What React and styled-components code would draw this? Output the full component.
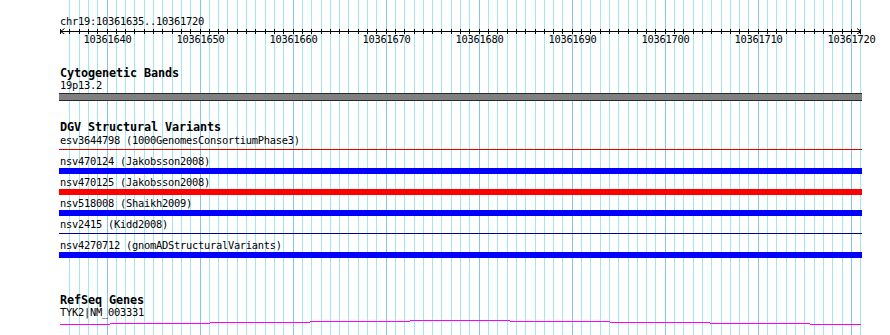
import React from "react";
import styled, { createGlobalStyle } from "styled-components";

const GlobalStyle = createGlobalStyle`
  html, body { margin: 0; padding: 0; background: #ffffff; }
  body { font-family: "DejaVu Sans Mono", "Liberation Mono", monospace; color: #000; }
`;

const START = 10361635;
const BASES = 86;
const PX = 9.304;
const ORIGIN = 1.5; // local x of the first base edge inside the track column
const COL_W = 803;

const gx = (k) => Math.floor(ORIGIN + k * PX);

const Page = styled.div`
  position: relative;
  width: 890px;
  height: 335px;
  overflow: hidden;
  background: #ffffff;
`;

const GridLayer = styled.svg`
  position: absolute;
  left: 59px;
  top: 0;
  z-index: 0;
`;

const Column = styled.div`
  position: relative;
  z-index: 1;
  margin-left: 59px;
  width: ${COL_W}px;
  display: flex;
  flex-direction: column;
`;

const RulerSection = styled.div`
  display: flex;
  flex-direction: column;
  padding-top: 16px;
`;

const Label = styled.div`
  font-family: "DejaVu Sans Mono", "Liberation Mono", monospace;
  font-size: 10.4px;
  letter-spacing: -0.26px;
  line-height: 11px;
  height: 11px;
  padding-left: 1px;
  white-space: nowrap;
  color: #000;
`;

const RulerSvg = styled.svg`
  display: block;
`;

const TickLabels = styled.div`
  position: relative;
  height: 11px;
`;

const TickLabel = styled.span`
  position: absolute;
  top: 0;
  transform: translateX(-50%);
  font-size: 10.4px;
  letter-spacing: -0.26px;
  line-height: 11px;
  white-space: nowrap;
`;

const Section = styled.section`
  display: flex;
  flex-direction: column;
  margin-top: ${(p) => p.$gap}px;
`;

const TrackTitle = styled.div`
  font-family: "DejaVu Sans Mono", "Liberation Mono", monospace;
  font-weight: bold;
  font-size: 11.8px;
  letter-spacing: -0.1px;
  line-height: 13px;
  height: 13px;
  padding-left: 1px;
  white-space: nowrap;
`;

const BandBar = styled.div`
  box-sizing: border-box;
  margin-top: 2px;
  height: 8px;
  background: #808080;
  border-top: 1px solid #2a2a2a;
  border-bottom: 1px solid #2a2a2a;
`;

const FeatureList = styled.div`
  display: flex;
  flex-direction: column;
  margin-top: 1px;
`;

const FeatureRow = styled.div`
  display: flex;
  flex-direction: column;
  height: 21px;
`;

const BarSlot = styled.div`
  box-sizing: border-box;
  margin-top: 1px;
  height: 6px;
  padding-top: ${(p) => (p.$thin ? 2 : 0)}px;
`;

const FeatureBar = styled.div`
  height: ${(p) => (p.$thin ? 1 : 6)}px;
  background: ${(p) => p.$color};
`;

const GeneSvg = styled.svg`
  display: block;
  margin-top: 1px;
`;

const variants = [
  { label: "esv3644798 (1000GenomesConsortiumPhase3)", thin: true, color: "#e00000" },
  { label: "nsv470124 (Jakobsson2008)", thin: false, color: "#0000ff" },
  { label: "nsv470125 (Jakobsson2008)", thin: false, color: "#ff0000" },
  { label: "nsv518008 (Shaikh2009)", thin: false, color: "#0000ff" },
  { label: "nsv2415 (Kidd2008)", thin: true, color: "#00009a" },
  { label: "nsv4270712 (gnomADStructuralVariants)", thin: false, color: "#0000ff" },
];

function Grid() {
  const lines = [];
  for (let k = 1; k <= BASES; k++) {
    const x = gx(k) + 0.5;
    const major = k % 10 === 5;
    lines.push(
      <line
        key={k}
        x1={x}
        x2={x}
        y1={0}
        y2={335}
        stroke={major ? "#84c4ee" : "#a4e6f0"}
        strokeWidth="1"
      />
    );
  }
  return (
    <GridLayer width={COL_W} height={335} shapeRendering="crispEdges">
      {lines}
    </GridLayer>
  );
}

function Ruler() {
  const ticks = [];
  for (let k = 0; k <= BASES; k++) {
    const x = (k === 0 ? 1 : gx(k)) + 0.5;
    ticks.push(<line key={k} x1={x} x2={x} y1={2} y2={7} stroke="#000" />);
  }
  const labels = [];
  for (let k = 5; k <= BASES; k += 10) {
    labels.push(
      <TickLabel key={k} style={{ left: gx(k) + 0.5 }}>
        {START + k}
      </TickLabel>
    );
  }
  return (
    <RulerSection>
      <Label>chr19:10361635..10361720</Label>
      <RulerSvg width={COL_W} height={7} shapeRendering="crispEdges">
        <line x1={1} x2={802} y1={4.5} y2={4.5} stroke="#000" />
        {ticks}
        <path d="M1.5 4.5 L5.5 1.5 M1.5 4.5 L5.5 7" stroke="#000" fill="none" shapeRendering="auto" />
        <path d="M802 4.5 L798 1.5 M802 4.5 L798 7" stroke="#000" fill="none" shapeRendering="auto" />
      </RulerSvg>
      <TickLabels>{labels}</TickLabels>
    </RulerSection>
  );
}

function GeneLine() {
  const steps = [
    [1, 51, 5],
    [51, 151, 4],
    [151, 251, 3],
    [251, 351, 2],
    [351, 451, 1],
    [451, 551, 2],
    [551, 651, 3],
    [651, 751, 4],
    [751, 802, 5],
  ];
  const d = steps.map(([a, b, y]) => `M${a} ${y + 0.5} H${b}`).join(" ");
  return (
    <GeneSvg width={COL_W} height={6} shapeRendering="crispEdges">
      <path d={d} stroke="#ff00ff" strokeWidth="1" fill="none" />
    </GeneSvg>
  );
}

export default function App() {
  return (
    <>
      <GlobalStyle />
      <Page>
        <Grid />
        <Column>
          <Ruler />
          <Section $gap={22}>
            <TrackTitle>Cytogenetic Bands</TrackTitle>
            <Label>19p13.2</Label>
            <BandBar />
          </Section>
          <Section $gap={20}>
            <TrackTitle>DGV Structural Variants</TrackTitle>
            <FeatureList>
              {variants.map((v) => (
                <FeatureRow key={v.label}>
                  <Label>{v.label}</Label>
                  <BarSlot $thin={v.thin}>
                    <FeatureBar $thin={v.thin} $color={v.color} />
                  </BarSlot>
                </FeatureRow>
              ))}
            </FeatureList>
          </Section>
          <Section $gap={33}>
            <TrackTitle>RefSeq Genes</TrackTitle>
            <Label>TYK2|NM_003331</Label>
            <GeneLine />
          </Section>
        </Column>
      </Page>
    </>
  );
}
